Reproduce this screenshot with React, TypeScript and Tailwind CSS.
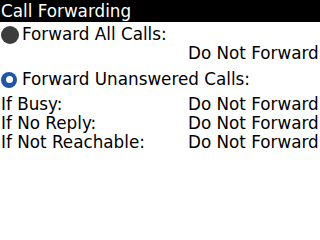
const font = { fontFamily: '"DejaVu Sans", Verdana, sans-serif' }

function Radio({ checked }: { checked?: boolean }) {
  return checked ? (
    <span className="w-[16px] h-[16px] rounded-full bg-[#1f56a8] shrink-0 flex items-center justify-center">
      <span className="w-[7px] h-[7px] rounded-full bg-white" />
    </span>
  ) : (
    <span className="w-[18px] h-[18px] rounded-full bg-[#3c3c3c] shrink-0" />
  )
}

function Row({ label, value }: { label: string; value: string }) {
  return (
    <div className="flex h-[19px]">
      <div className="w-[188px] pl-[1px]">{label}</div>
      <div>{value}</div>
    </div>
  )
}

export default function App() {
  return (
    <div className="w-[320px] h-[240px] bg-white text-black text-[16.8px] leading-[19px] overflow-hidden" style={font}>
      <div className="h-[22px] bg-black text-white flex items-center pl-[1px]">Call Forwarding</div>
      <div className="flex items-center h-[19px] mt-[3px] pl-[1px] gap-[3px]">
        <Radio />
        <span>Forward All Calls:</span>
      </div>
      <Row label="" value="Do Not Forward" />
      <div className="flex items-center h-[19px] mt-[7px] pl-[1px] gap-[5px]">
        <Radio checked />
        <span>Forward Unanswered Calls:</span>
      </div>
      <div className="mt-[6px]">
        <Row label="If Busy:" value="Do Not Forward" />
        <Row label="If No Reply:" value="Do Not Forward" />
        <Row label="If Not Reachable:" value="Do Not Forward" />
      </div>
    </div>
  )
}
